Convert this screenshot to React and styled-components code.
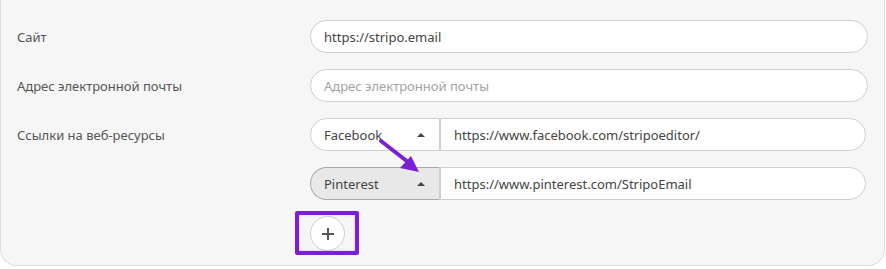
import styled, { createGlobalStyle } from "styled-components";

const GlobalStyle = createGlobalStyle`
  html, body {
    margin: 0;
    padding: 0;
    background: #ffffff;
  }
  body {
    font-family: "Noto Sans", "Open Sans", sans-serif;
  }
`;

const Page = styled.div`
  position: relative;
`;

const Panel = styled.div`
  width: 885px;
  box-sizing: border-box;
  padding: 20px 16px 14px 0;
  background: #f6f6f6;
  border: 1px solid #dcdcdc;
  border-top: none;
  border-radius: 0 0 17px 17px;
  display: flex;
  flex-direction: column;
  gap: 16px;
`;

const Row = styled.div`
  display: grid;
  grid-template-columns: 309px 1fr;
  align-items: start;
  padding-right: ${(p) => p.$inset || 0}px;
`;

const Label = styled.div`
  height: 33px;
  display: flex;
  align-items: center;
  padding-left: 16px;
  font-size: 13px;
  color: #555555;
`;

const Stack = styled.div`
  display: flex;
  flex-direction: column;
  gap: 16px;
`;

const Field = styled.div`
  height: 33px;
  box-sizing: border-box;
  display: flex;
  align-items: center;
  padding: 0 13px;
  background: #ffffff;
  border: 1px solid #cfcfcf;
  border-radius: ${(p) => (p.$joined ? "0 17px 17px 0" : "17px")};
  flex: 1;
  font-size: 13px;
  color: ${(p) => (p.$placeholder ? "#a3a3a3" : "#444444")};
`;

const Combo = styled.div`
  display: flex;
  height: 33px;
`;

const Select = styled.div`
  width: 130px;
  box-sizing: border-box;
  display: flex;
  align-items: center;
  justify-content: space-between;
  padding: 0 12px 0 13px;
  background: ${(p) => (p.$active ? "#e8e8e8" : "#ffffff")};
  border: 1px solid ${(p) => (p.$active ? "#a9a9a9" : "#cfcfcf")};
  border-right: 1px solid #cfcfcf;
  border-radius: 17px 0 0 17px;
  font-size: 13px;
  color: #444444;
`;

const Caret = styled.span`
  width: 0;
  height: 0;
  border-left: 4px solid transparent;
  border-right: 4px solid transparent;
  border-bottom: 4px solid #444444;
  margin-right: 2px;
`;

const AddWrap = styled.div`
  position: relative;
  width: 35px;
  height: 35px;
`;

const AddButton = styled.button`
  width: 35px;
  height: 35px;
  border-radius: 50%;
  border: 1px solid #cfcfcf;
  background: #ffffff;
  display: flex;
  align-items: center;
  justify-content: center;
  padding: 0;
  cursor: pointer;
`;

const Highlight = styled.div`
  position: absolute;
  left: -15px;
  top: -5px;
  width: 64px;
  height: 44px;
  box-sizing: border-box;
  border: 4px solid #7b1fd6;
  border-radius: 2px;
  box-shadow: inset 0 0 3px rgba(123, 31, 214, 0.25);
  pointer-events: none;
`;

const Pointer = styled.svg`
  position: absolute;
  left: 378px;
  top: 138px;
  pointer-events: none;
`;

const socials = [
  { name: "Facebook", url: "https://www.facebook.com/stripoeditor/" },
  { name: "Pinterest", url: "https://www.pinterest.com/StripoEmail", active: true },
];

export default function App() {
  return (
    <Page>
      <GlobalStyle />
      <Panel>
        <Row>
          <Label>Сайт</Label>
          <Field>https://stripo.email</Field>
        </Row>
        <Row>
          <Label>Адрес электронной почты</Label>
          <Field $placeholder>Адрес электронной почты</Field>
        </Row>
        <Row $inset={2}>
          <Label>Ссылки на веб-ресурсы</Label>
          <Stack>
            {socials.map((s) => (
              <Combo key={s.name}>
                <Select $active={s.active}>
                  {s.name}
                  <Caret />
                </Select>
                <Field $joined>{s.url}</Field>
              </Combo>
            ))}
            <AddWrap>
              <AddButton>
                <svg width="14" height="14" viewBox="0 0 14 14">
                  <path d="M7 1v12M1 7h12" stroke="#555" strokeWidth="2" />
                </svg>
              </AddButton>
              <Highlight />
            </AddWrap>
          </Stack>
        </Row>
      </Panel>
      <Pointer width="46" height="38" viewBox="0 0 46 38">
        <path d="M3 3 L30 24" stroke="#7b1fd6" strokeWidth="4" strokeLinecap="round" />
        <path d="M41 34 L22 30 L33 18 Z" fill="#7b1fd6" />
      </Pointer>
    </Page>
  );
}
